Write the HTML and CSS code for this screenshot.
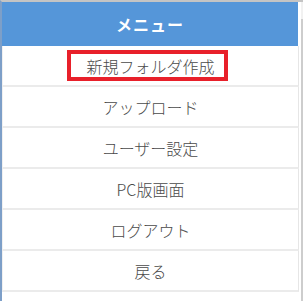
FILE: index.html
```html
<!DOCTYPE html>
<html lang="ja">
<head>
<meta charset="utf-8">
<link rel="stylesheet" href="styles.css">
</head>
<body>
<div class="frame">
  <div class="main">
    <div class="header">メニュー</div>
    <ul class="menu">
      <li class="item"><span class="highlight">新規フォルダ作成</span></li>
      <li class="item">アップロード</li>
      <li class="item">ユーザー設定</li>
      <li class="item">PC版画面</li>
      <li class="item">ログアウト</li>
      <li class="item">戻る</li>
    </ul>
  </div>
  <div class="scrollbar"><div class="thumb"></div></div>
</div>
</body>
</html>
```
FILE: styles.css
```css
html, body {
  margin: 0;
  padding: 0;
  background: #ffffff;
}
body {
  font-family: "Noto Sans CJK JP", "Liberation Sans", sans-serif;
  color: #333333;
}
.frame {
  display: flex;
  width: 303px;
  height: 301px;
  box-sizing: border-box;
  border-top: 2px solid #c4c4c4;
  border-left: 2px solid #7d9fc8;
  overflow: hidden;
}
.main {
  width: 297px;
  flex: none;
}
.header {
  height: 44px;
  width: 296px;
  background: #5596d9;
  color: #ffffff;
  font-weight: bold;
  font-size: 16px;
  display: flex;
  align-items: center;
  justify-content: center;
  letter-spacing: 1px;
}
.menu {
  list-style: none;
  margin: 0;
  padding: 0;
}
.item {
  height: 39px;
  border-bottom: 2px solid #ebebeb;
  border-left: 1px solid #f0f0f0;
  border-right: 1px solid #e6e6e6;
  display: flex;
  align-items: center;
  justify-content: center;
  font-size: 16px;
  font-weight: 300;
  color: #4a4a4a;
}
.highlight {
  display: flex;
  align-items: center;
  justify-content: center;
  box-sizing: border-box;
  width: 161px;
  height: 31px;
  padding-left: 6px;
  margin-right: 6px;
  border: 4px solid #e8202a;
}
.scrollbar {
  margin-left: 2px;
  width: 4px;
  flex: none;
  background: #f1f1f1;
  padding-top: 17px;
}
.thumb {
  height: 100%;
  background: #cdcdcd;
}
```
